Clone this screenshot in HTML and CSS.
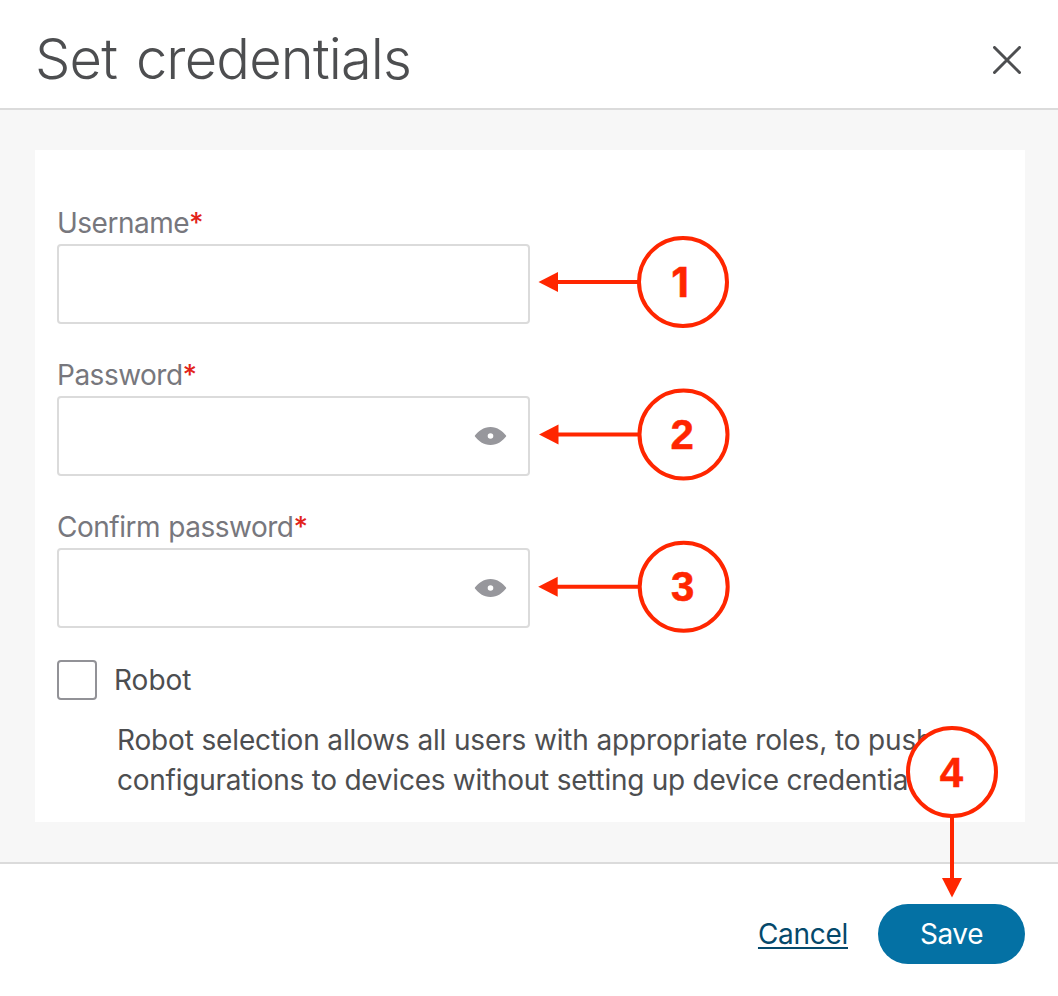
FILE: index.html
```html
<!DOCTYPE html>
<html lang="en">
<head>
    <meta charset="UTF-8">
    <meta name="viewport" content="width=device-width, initial-scale=1.0">
    <title>Set credentials</title>
    <link rel="stylesheet" href="styles.css">
</head>
<body>
    <div class="dialog">
        <header class="dialog-header">
            <h1>Set credentials</h1>
            <button class="close" type="button" aria-label="Close">
                <svg width="28" height="28" viewBox="0 0 28 28">
                    <path d="M1.5 1.5 26.5 26.5 M26.5 1.5 1.5 26.5"/>
                </svg>
            </button>
        </header>

        <main class="dialog-body">
            <form class="panel">
                <div class="field">
                    <label for="username">Username<span class="required">*</span></label>
                    <div class="input-wrap">
                        <input id="username" type="text">
                        <svg class="callout callout-1" width="192" height="94" viewBox="0 0 192 94">
                            <path class="line" d="M18 47H100"/>
                            <path class="head" d="M0.5 47 20 37V57Z"/>
                            <circle cx="145" cy="47" r="44"/>
                            <text class="one" x="142" y="62">1</text>
                        </svg>
                    </div>
                </div>

                <div class="field">
                    <label for="password">Password<span class="required">*</span></label>
                    <div class="input-wrap">
                        <input id="password" type="password">
                        <svg class="eye" width="32" height="18" viewBox="0 0 32 18">
                            <path d="M0 9C4 4 9 0 16 0S28 4 32 9C28 14 23 18 16 18S4 14 0 9ZM16 6.2A2.8 2.8 0 1 0 16 11.8A2.8 2.8 0 1 0 16 6.2Z"/>
                        </svg>
                        <svg class="callout callout-2" width="192" height="94" viewBox="0 0 192 94">
                            <path class="line" d="M18 47H100"/>
                            <path class="head" d="M0.5 47 20 37V57Z"/>
                            <circle cx="145" cy="47" r="44"/>
                            <text x="143.8" y="61.5">2</text>
                        </svg>
                    </div>
                </div>

                <div class="field">
                    <label for="confirm">Confirm password<span class="required">*</span></label>
                    <div class="input-wrap">
                        <input id="confirm" type="password">
                        <svg class="eye" width="32" height="18" viewBox="0 0 32 18">
                            <path d="M0 9C4 4 9 0 16 0S28 4 32 9C28 14 23 18 16 18S4 14 0 9ZM16 6.2A2.8 2.8 0 1 0 16 11.8A2.8 2.8 0 1 0 16 6.2Z"/>
                        </svg>
                        <svg class="callout callout-3" width="192" height="94" viewBox="0 0 192 94">
                            <path class="line" d="M18 47H100"/>
                            <path class="head" d="M-0.5 47 19 37V57Z"/>
                            <circle cx="145" cy="47" r="44"/>
                            <text x="144" y="61.5">3</text>
                        </svg>
                    </div>
                </div>

                <label class="checkbox">
                    <input type="checkbox">
                    <span>Robot</span>
                </label>
                <p class="hint">
                    Robot selection allows all users with appropriate roles, to push<br>
                    <span class="hint-tight">configurations to devices without setting up device credentials</span>
                </p>
            </form>
        </main>

        <footer class="dialog-footer">
            <a class="cancel" href="#">Cancel</a>
            <div class="save-wrap">
                <button class="save" type="button">Save</button>
                <svg class="callout callout-4" width="94" height="174" viewBox="0 0 94 174">
                    <path class="line" d="M47 91V156"/>
                    <path class="head" d="M37 153H57L47 172.5Z"/>
                    <circle cx="47" cy="47" r="44"/>
                    <text x="46.5" y="62">4</text>
                </svg>
            </div>
        </footer>
    </div>
</body>
</html>
```

FILE: styles.css
```css
* {
    box-sizing: border-box;
}
body {
    margin: 0;
    background: #fff;
    color: #4d4e50;
    font-family: Inter, "Liberation Sans", sans-serif;
    font-size: 28px;
    line-height: 40px;
}
.dialog {
    display: flex;
    flex-direction: column;
    height: 996px;
    overflow: hidden;
}

/* header */
.dialog-header {
    display: flex;
    align-items: center;
    justify-content: space-between;
    height: 110px;
    padding: 10px 37px 0 35px;
    border-bottom: 2px solid #dbdbdb;
}
h1 {
    margin: 0;
    font-size: 56px;
    font-weight: 300;
    line-height: 72px;
    letter-spacing: -0.85px;
    word-spacing: 4px;
}
.close {
    display: flex;
    padding: 0;
    border: 0;
    background: none;
}
.close svg {
    margin-top: 11px;
    margin-bottom: 9px;
    fill: none;
    stroke: #4d4e50;
    stroke-width: 3;
    stroke-linecap: round;
}

/* body */
.dialog-body {
    height: 754px;
    padding: 40px 33px 40px 35px;
    background: #f7f7f7;
    border-bottom: 2px solid #dbdbdb;
}
.panel {
    height: 672px;
    padding: 54px 22px 0;
    background: #fff;
}
.field {
    margin-bottom: 32px;
}
.field label {
    display: block;
    height: 40px;
    line-height: 38px;
    color: #77777d;
    letter-spacing: -0.5px;
    word-spacing: 1px;
}
.required {
    color: #e2231a;
    font-weight: 500;
}
.input-wrap {
    position: relative;
    width: 473px;
    height: 80px;
}
.input-wrap input {
    display: block;
    width: 100%;
    height: 100%;
    margin: 0;
    padding: 0 70px 0 16px;
    border: 2px solid #dbdbdb;
    border-radius: 4px;
    background: #fff;
    font: inherit;
}
.eye {
    position: absolute;
    top: 31px;
    right: 24px;
    transform: translateX(0.5px);
    fill: #97979c;
    fill-rule: evenodd;
}
.checkbox {
    display: flex;
    align-items: center;
    gap: 17px;
}
.checkbox input {
    appearance: none;
    width: 40px;
    height: 40px;
    margin: 0;
    border: 2px solid #929297;
    border-radius: 4px;
}
.hint {
    margin: 20px 0 0 60px;
    white-space: nowrap;
    letter-spacing: -0.15px;
}
.hint-tight {
    letter-spacing: -0.25px;
}

/* footer */
.dialog-footer {
    display: flex;
    align-items: center;
    justify-content: flex-end;
    gap: 30px;
    height: 132px;
    padding: 8px 33px 0 0;
}
.cancel {
    color: #05496b;
    letter-spacing: -0.3px;
    text-decoration-thickness: 2px;
    text-underline-offset: 3px;
}
.save-wrap {
    position: relative;
}
.save {
    display: block;
    width: 147px;
    height: 60px;
    padding: 0;
    border: 0;
    border-radius: 30px;
    background: #0471a4;
    color: #fff;
    font: inherit;
    letter-spacing: -0.4px;
}

/* numbered callouts */
.callout {
    position: absolute;
    overflow: visible;
}
.callout-1 {
    top: -9px;
    left: 481px;
}
.callout-2 {
    top: -9px;
    left: 481px;
    transform: translate(0.5px, 0.5px);
}
.callout-3 {
    top: -9px;
    left: 481px;
    transform: translate(0.7px, 0.8px);
}
.callout-4 {
    top: -179px;
    left: 27px;
}
.callout .line {
    stroke: #ff2600;
    stroke-width: 4;
}
.callout .head {
    fill: #ff2600;
}
.callout circle {
    fill: #fff;
    stroke: #ff2600;
    stroke-width: 4;
}
.callout text {
    fill: #ff2600;
    stroke: #ff2600;
    stroke-width: 0.5;
    font-family: "Liberation Sans", Arial, sans-serif;
    font-size: 42px;
    font-weight: 700;
    text-anchor: middle;
}
.callout .one {
    font-family: Inter, sans-serif;
    font-size: 41px;
}
```
